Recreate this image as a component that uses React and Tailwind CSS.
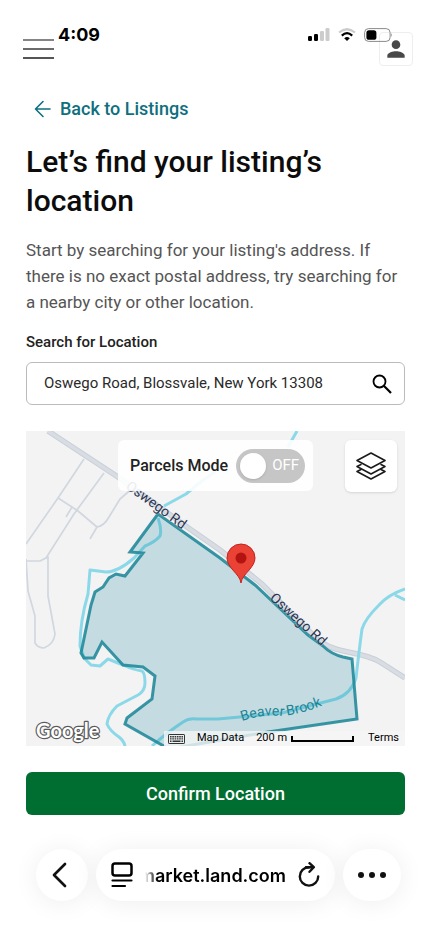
import { useState } from "react";
import { MdPerson } from "react-icons/md";

const roads = [
  "M58 28 L32 67 L0 113 M78 42 L48 83 L20 127",
  "M32 67 L46 76 L52 80 L71 96 Q78 95 83 86 L94 68 L108 56",
  "M71 96 L64 108 M46 76 L40 86",
  "M0 130 H14 L22 126 L22 165 L29 203 Q28 213 18 217 Q12 217 9 212 V185 L2 160 L0 128",
];

const brooks = [
  "M138 75 L160 63 L172 53 L190 40 M262 16 L271 0",
  "M132 87 Q136 98 134 105 Q129 111 119 115 L108 127 Q92 141 80 141 L64 139 L62 163 Q54 190 54 215 L58 227 L65 234 L74 235 L82 228 L97 234 Q108 239 116 240 Q119 242 119 252 Q119 260 112 264 L91 275 Q82 284 81 293 Q84 300 93 306 Q98 310 99 315",
  "M126 315 Q140 302 157 291 Q163 287 170 288 L192 288 L256 282 L310 268 Q325 263 330 247 Q333 220 336 198 Q339 188 353 174 Q362 164 379 158 M369 164 L379 169",
];

const parcel =
  "M132 83 L104 121 L117 122 L99 145 L90 143 L83 147 L77 156 L69 161 L65 174 L55 222 L58 227 L68 227 L76 211 L97 234 L117 236 L129 245 L126 268 L101 287 L99 293 L143 318 L242 301 L331 288 L326 228 L317 226 Q305 223 297 215 L282 204 L229 154 L194 127 Z";

const mainRoad =
  "M22 0 L92 46 L161 96 L194 119 L236 153 L290 207 Q300 217 322 221 Q344 225 354 231 L379 247";

function StatusIcons() {
  return (
    <div className="absolute top-7 right-[38px] flex items-center gap-2">
      <svg width="22" height="14" viewBox="0 0 22 14">
        <rect x="0" y="8" width="4" height="5" rx="1.2" />
        <rect x="6" y="6" width="4" height="7" rx="1.2" />
        <rect x="12" y="3" width="4" height="10" rx="1.2" fill="#ccc" />
        <rect x="17.5" y="0" width="4" height="13" rx="1.2" fill="#ccc" />
      </svg>
      <svg width="18" height="14" viewBox="0 0 18 14" fill="none">
        <path d="M1 4.5 Q9 -2 17 4.5" stroke="#ccc" strokeWidth="2.2" />
        <path d="M3.8 7.6 Q9 2.8 14.2 7.6" stroke="#000" strokeWidth="2.2" />
        <path d="M6.2 10.2 Q9 7.8 11.8 10.2 L9 13 Z" fill="#000" />
      </svg>
      <svg width="29" height="14" viewBox="0 0 29 14">
        <rect x="0.6" y="0.6" width="25.5" height="12.8" rx="4" fill="none" stroke="#8a8a8a" />
        <rect x="2.4" y="2.2" width="10" height="9.6" rx="2.6" />
        <path d="M27.3 5 Q29 7 27.3 9 Z" fill="#888" />
      </svg>
    </div>
  );
}

function Header() {
  return (
    <header className="relative flex items-start justify-between pt-7 pl-[23px] pr-[18px]">
      <div className="flex items-start gap-1">
        <button aria-label="Menu" className="flex w-[31px] flex-col gap-[7px] pt-[11px]">
          <span className="h-0.5 w-full bg-[#858585]" />
          <span className="h-0.5 w-full bg-[#6b6b6b]" />
          <span className="h-0.5 w-full bg-[#555]" />
        </button>
        <span className="font-['Inter'] text-[18px] leading-[14px] font-bold text-black">
          4:09
        </span>
      </div>
      <button
        aria-label="Account"
        className="mt-1 flex size-[34px] items-center justify-center rounded border border-[#eee] text-[#484848]"
      >
        <MdPerson size={26} />
      </button>
      <StatusIcons />
    </header>
  );
}

function LayersIcon() {
  return (
    <svg
      width="30"
      height="28"
      viewBox="0 0 30 28"
      fill="none"
      stroke="#1a1a1a"
      strokeWidth="1.6"
      strokeLinejoin="round"
      strokeLinecap="round"
    >
      <path d="M15 1 L29 8.5 L15 16 L1 8.5 Z" />
      <path d="M5 12.5 L1 14.5 L15 22 L29 14.5 L25 12.5" />
      <path d="M5 17.5 L1 19.5 L15 27 L29 19.5 L25 17.5" />
    </svg>
  );
}

function ParcelMap() {
  const [parcels, setParcels] = useState(false);

  return (
    <section
      aria-label="Map"
      className="relative mt-[26px] h-[315px] overflow-hidden bg-[#f4f3f4]"
    >
      <svg
        viewBox="0 0 379 315"
        preserveAspectRatio="xMidYMid slice"
        className="size-full font-['Roboto']"
        fill="none"
      >
        {roads.map((d) => (
          <path key={d} d={d} stroke="#d0d7df" strokeWidth="1.7" strokeLinejoin="round" />
        ))}
        <path d={mainRoad} stroke="#c6d0d8" strokeWidth="5.5" />
        <path d={mainRoad} stroke="#d9dce3" strokeWidth="3.5" />
        {brooks.map((d) => (
          <path key={d} d={d} stroke="#8bd9e8" strokeWidth="3" strokeLinejoin="round" />
        ))}
        <path d={parcel} fill="#1c8f9f" fillOpacity="0.22" stroke="#1f8798" strokeOpacity="0.88" strokeWidth="3" />
        <g fontSize="14" fill="#2b3550" stroke="#f4f3f4" strokeOpacity="0.4" strokeWidth="1" paintOrder="stroke">
          <text transform="translate(99 57) rotate(36)">Oswego Rd</text>
          <text transform="translate(243 168) rotate(42)">Oswego Rd</text>
        </g>
        <path id="brook-label" d="M216 290 Q236 283 256 285 Q276 283 300 273" />
        <text fontSize="14" fill="#1c8497">
          <textPath href="#brook-label">Beaver Brook</textPath>
        </text>
        <path
          d="M215 152 C214 143 201 137 201 127 A14 14 0 0 1 229 127 C229 137 216 143 215 152 Z"
          fill="#ea4335"
          stroke="#c5221f"
        />
        <circle cx="215" cy="127" r="5.5" fill="#b31412" />
        <text
          x="10"
          y="307"
          fontSize="20"
          fontFamily="Lato"
          fontWeight="700"
          fill="#fff"
          stroke="#5a5a5a"
          strokeWidth="2.4"
          paintOrder="stroke"
          strokeLinejoin="round"
        >
          Google
        </text>
      </svg>

      <div className="absolute top-[9px] left-[92px] flex h-[51px] items-center gap-2 rounded-md bg-white/90 pr-2 pl-3">
        <label htmlFor="parcels" className="text-[16px] font-medium text-[#222]">
          Parcels Mode
        </label>
        <span className="relative flex h-[34px] w-[69px] items-center justify-between rounded-full bg-[#c6c6c6] pr-1.5 pl-1">
          <input
            id="parcels"
            type="checkbox"
            role="switch"
            checked={parcels}
            onChange={(e) => setParcels(e.target.checked)}
            className="absolute inset-0 size-full cursor-pointer opacity-0"
          />
          <span className="size-[26px] rounded-full bg-white shadow" />
          <span className="text-[15px] text-white">{parcels ? "ON" : "OFF"}</span>
        </span>
      </div>

      <button
        aria-label="Map layers"
        className="absolute top-[9px] right-2 flex size-[52px] items-center justify-center rounded-md bg-white shadow"
      >
        <LayersIcon />
      </button>

      <div className="absolute right-0 bottom-0 flex h-[15px] items-center bg-[#f5f5f5]/80 pr-1.5 pl-1 text-[11px] text-black">
        <button aria-label="Keyboard shortcuts" className="mr-3">
          <svg width="17" height="10" viewBox="0 0 17 10">
            <rect x="0.5" y="0.5" width="16" height="9" rx="0.6" fill="none" stroke="#333" />
            <path
              d="M2 2.7 H15 M2 4.9 H15"
              stroke="#333"
              strokeWidth="1.4"
              strokeDasharray="1.6 0.7"
            />
            <path d="M2 7.3 H3.5 M4.5 7.3 H12.5 M13.5 7.3 H15" stroke="#333" strokeWidth="1.4" />
          </svg>
        </button>
        <button className="mr-3">Map Data</button>
        <span className="mr-1">200 m</span>
        <span className="mr-3.5 h-1.5 w-[63px] border-2 border-t-0 border-black" />
        <a href="#terms">Terms</a>
      </div>
    </section>
  );
}

function BrowserBar() {
  return (
    <nav className="mt-[34px] flex items-center justify-between gap-2 pr-[30px] pb-9 pl-9">
      <button
        aria-label="Back"
        className="flex size-[52px] shrink-0 items-center justify-center rounded-full bg-white shadow-[0_2px_26px_rgba(0,0,0,0.07)]"
      >
        <svg width="16" height="26" viewBox="0 0 16 26" fill="none" stroke="#111" strokeWidth="2.7" strokeLinecap="round" strokeLinejoin="round" className="mr-1">
          <path d="M13 2 L2 13 L13 24" />
        </svg>
      </button>
      <div className="flex h-[52px] min-w-0 flex-1 items-center rounded-full bg-white px-[15px] shadow-[0_2px_26px_rgba(0,0,0,0.07)]">
        <button aria-label="Page menu" className="shrink-0">
          <svg width="22" height="26" viewBox="0 0 22 26" fill="none" stroke="#000" strokeLinecap="round">
            <rect x="1.5" y="1.5" width="19" height="12" rx="2.5" strokeWidth="2.5" />
            <path d="M1.5 18.5 H20.5 M1.5 24 H14" strokeWidth="2.2" />
          </svg>
        </button>
        <div className="ml-3 flex min-w-0 flex-1 justify-end overflow-hidden font-['Inter'] text-[18px] font-semibold text-black [mask-image:linear-gradient(to_right,transparent,black_12px)]">
          <span className="whitespace-nowrap">market.land.com</span>
        </div>
        <button aria-label="Reload" className="ml-3 shrink-0">
          <svg width="22" height="26" viewBox="0 0 22 26" fill="none" stroke="#111" strokeWidth="2.4" strokeLinecap="round" strokeLinejoin="round">
            <path d="M11 5.2 A9.2 9.2 0 1 0 20.2 14.4" />
            <path d="M8 5.2 H15.5 M11.5 1.2 L15.8 5.2 L11.5 9.8" />
          </svg>
        </button>
      </div>
      <button
        aria-label="More"
        className="flex h-[52px] w-[58px] shrink-0 items-center justify-center gap-[5px] rounded-full bg-white shadow-[0_2px_26px_rgba(0,0,0,0.07)]"
      >
        <span className="size-1.5 rounded-full bg-[#111]" />
        <span className="size-1.5 rounded-full bg-[#111]" />
        <span className="size-1.5 rounded-full bg-[#111]" />
      </button>
    </nav>
  );
}

export default function App() {
  const [address, setAddress] = useState("Oswego Road, Blossvale, New York 13308");

  return (
    <div className="min-h-screen overflow-hidden bg-white font-['Roboto',sans-serif]">
      <Header />
      <main className="px-[26px]">
        <a
          href="#listings"
          className="mt-8 ml-2 flex items-center gap-2 text-[18px] leading-[22px] font-medium text-[#0e6f7e]"
        >
          <svg width="18" height="18" viewBox="0 0 18 18" fill="none" stroke="currentColor" strokeWidth="1.6" strokeLinecap="round" strokeLinejoin="round">
            <path d="M16 9 H1.5 M9 1.5 L1.5 9 L9 16.5" />
          </svg>
          Back to Listings
        </a>
        <h1 className="mt-[22px] text-[30px] leading-[39px] font-medium text-[#0c0c0c]">
          Let’s find your listing’s location
        </h1>
        <p className="mt-[17px] text-[17px] leading-[26px] text-[#555]">
          Start by searching for your listing's address. If there is no exact
          postal address, try searching for a nearby city or other location.
        </p>
        <label
          htmlFor="location"
          className="mt-[17px] block text-[15px] leading-[20px] font-medium text-[#222]"
        >
          Search for Location
        </label>
        <div className="mt-2.5 flex h-[43px] items-center rounded-md border border-[#bbb] pr-3 pl-[17px]">
          <input
            id="location"
            type="text"
            value={address}
            onChange={(e) => setAddress(e.target.value)}
            className="min-w-0 flex-1 text-[15px] text-[#2a2a2a] outline-none"
          />
          <button aria-label="Search" className="text-black">
            <svg width="20" height="20" viewBox="0 0 20 20" fill="none" stroke="currentColor" strokeWidth="1.8">
              <circle cx="7.5" cy="7.5" r="6" />
              <path d="M11.8 11.8 L19 19" strokeWidth="2.2" />
            </svg>
          </button>
        </div>
        <ParcelMap />
        <button className="mt-[26px] h-[43px] w-full rounded-md bg-[#006e30] text-[18px] font-medium text-white">
          Confirm Location
        </button>
      </main>
      <BrowserBar />
    </div>
  );
}
